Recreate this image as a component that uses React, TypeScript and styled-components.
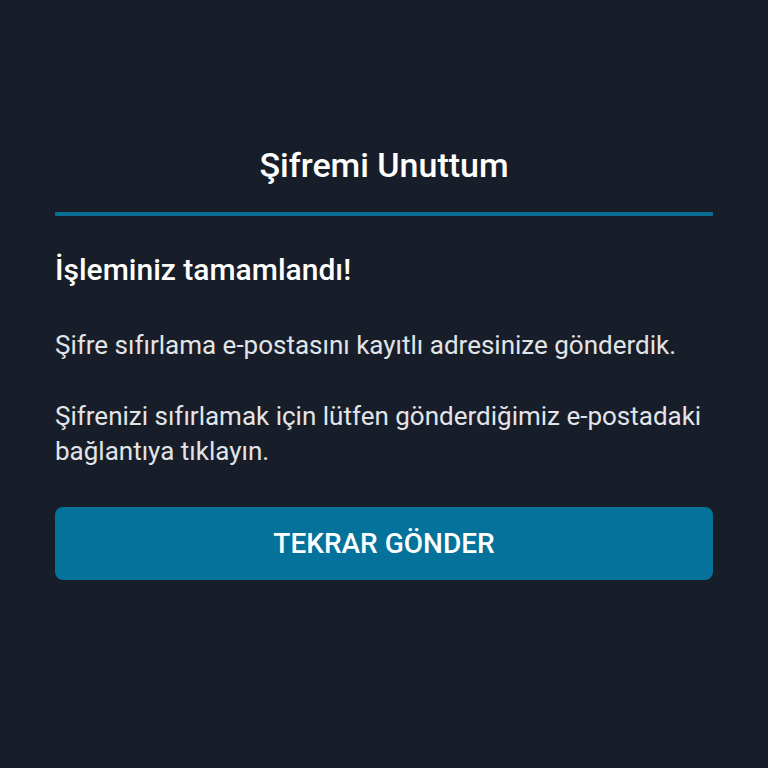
import styled, { createGlobalStyle } from 'styled-components';

const GlobalStyle = createGlobalStyle`
  html, body {
    margin: 0;
    padding: 0;
    background: #181e29;
  }
  body {
    font-family: Roboto, "Noto Sans", sans-serif;
  }
`;

const Page = styled.div`
  min-height: 768px;
  box-sizing: border-box;
  padding: 144px 55px 0;
  display: flex;
  flex-direction: column;
  background: #181e29;
`;

const Title = styled.h1`
  margin: 0;
  text-align: center;
  font-size: 34px;
  line-height: 42px;
  font-weight: 500;
  color: #ffffff;
`;

const Divider = styled.div`
  height: 4px;
  margin-top: 26px;
  background: #0a6f95;
  border-radius: 1px;
`;

const Heading = styled.h2`
  margin: 36px 0 0;
  font-size: 30px;
  line-height: 36px;
  font-weight: 500;
  color: #ffffff;
`;

const Messages = styled.div`
  margin-top: 40px;
  display: flex;
  flex-direction: column;
  gap: 36px;
`;

const Text = styled.p`
  margin: 0;
  font-size: 26px;
  line-height: 35px;
  color: #e2e4e8;
`;

const ResendButton = styled.button`
  margin-top: 38px;
  height: 73px;
  border: none;
  border-radius: 8px;
  background: #04729a;
  color: #ffffff;
  font-family: Roboto, "Noto Sans", sans-serif;
  font-size: 28px;
  font-weight: 500;
  cursor: pointer;
`;

const App = () => {
  return (
    <>
      <GlobalStyle />
      <Page>
        <Title>Şifremi Unuttum</Title>
        <Divider />
        <Heading>İşleminiz tamamlandı!</Heading>
        <Messages>
          <Text>Şifre sıfırlama e-postasını kayıtlı adresinize gönderdik.</Text>
          <Text>
            Şifrenizi sıfırlamak için lütfen gönderdiğimiz e-postadaki
            bağlantıya tıklayın.
          </Text>
        </Messages>
        <ResendButton>TEKRAR GÖNDER</ResendButton>
      </Page>
    </>
  );
};

export default App;
